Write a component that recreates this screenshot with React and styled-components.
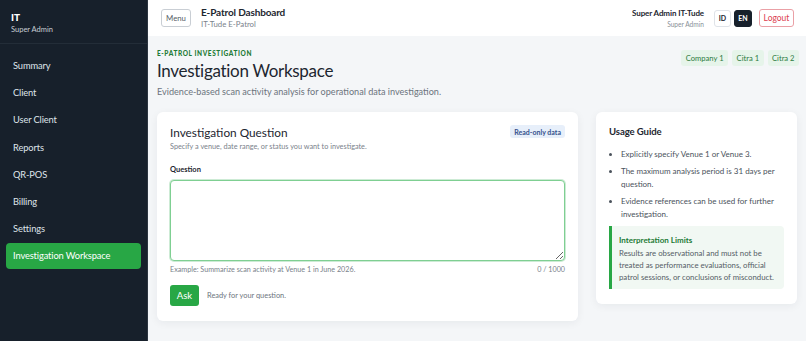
import React from "react";
import styled, { createGlobalStyle } from "styled-components";

const Global = createGlobalStyle`
  html, body { margin: 0; padding: 0; }
  body { font-family: Lato, "Noto Sans", sans-serif; background: #f4f6f8; color: #1d2630; }
  * { box-sizing: border-box; }
`;

const Shell = styled.div`
  display: flex;
  width: 806px;
  height: 341px;
  overflow: hidden;
`;

const Sidebar = styled.aside`
  width: 148px;
  flex: none;
  background: #17202b;
  border-right: 1px solid #2c3540;
  display: flex;
  flex-direction: column;
`;

const Brand = styled.div`
  padding: 11px 11px 9px;
  border-bottom: 1px solid #232d38;
  height: 44px;
`;

const BrandTitle = styled.div`
  color: #fff;
  font-weight: 900;
  font-size: 10px;
  line-height: 13px;
`;

const BrandSub = styled.div`
  color: #c7cdd4;
  font-size: 7.5px;
  line-height: 12px;
`;

const Nav = styled.nav`
  display: flex;
  flex-direction: column;
  gap: 2px;
  padding: 9px 6px;
`;

const NavItem = styled.div`
  height: 25.2px;
  display: flex;
  align-items: center;
  padding: 0 7px;
  border-radius: 4px;
  font-size: 9.3px;
  letter-spacing: -0.12px;
  color: ${(p) => (p.$active ? "#ffffff" : "#dfe4ea")};
  background: ${(p) => (p.$active ? "#28a745" : "transparent")};
`;

const Main = styled.div`
  flex: 1;
  display: flex;
  flex-direction: column;
  min-width: 0;
`;

const Topbar = styled.header`
  height: 36px;
  background: #fff;
  display: flex;
  align-items: center;
  padding: 0 12px 0 13px;
  gap: 10px;
`;

const MenuBtn = styled.button`
  height: 18px;
  width: 30px;
  padding: 0;
  border: 1px solid #c9ced4;
  border-radius: 3px;
  background: #fff;
  color: #555d66;
  font-family: inherit;
  font-size: 7.8px;
`;

const TitleBlock = styled.div`
  display: flex;
  flex-direction: column;
  flex: 1;
`;

const AppTitle = styled.div`
  font-size: 10px;
  font-weight: 700;
  letter-spacing: -0.15px;
  line-height: 13px;
  color: #1d2630;
`;

const AppSub = styled.div`
  font-size: 7.8px;
  color: #7a828b;
  line-height: 11px;
`;

const UserBlock = styled.div`
  display: flex;
  flex-direction: column;
  align-items: flex-end;
`;

const UserName = styled.div`
  font-size: 8px;
  font-weight: 700;
  letter-spacing: -0.1px;
  line-height: 11px;
`;

const UserRole = styled.div`
  font-size: 6.6px;
  color: #8a9098;
  line-height: 10px;
`;

const Lang = styled.button`
  height: 17px;
  width: ${(p) => (p.$active ? "18px" : "17px")};
  padding: 0;
  border-radius: 3px;
  font-family: inherit;
  font-size: 7px;
  font-weight: 700;
  border: 1px solid ${(p) => (p.$active ? "#17202b" : "#dfe3e8")};
  background: ${(p) => (p.$active ? "#17202b" : "#fff")};
  color: ${(p) => (p.$active ? "#fff" : "#1d2630")};
`;

const Actions = styled.div`
  display: flex;
  gap: 3px;
  align-items: center;
`;

const Logout = styled.button`
  margin-left: 4px;
  height: 18px;
  width: 35px;
  padding: 0;
  border-radius: 3px;
  border: 1px solid #eaa0a6;
  background: #fff;
  color: #dc4150;
  font-family: inherit;
  font-size: 8.5px;
`;

const Content = styled.main`
  padding: 13px 7px 0 9px;
  display: flex;
  flex-direction: column;
`;

const PageHead = styled.div`
  display: flex;
  justify-content: space-between;
  align-items: flex-start;
`;

const Eyebrow = styled.div`
  font-size: 6.5px;
  font-weight: 900;
  letter-spacing: 0.6px;
  color: #1e7b36;
  line-height: 10px;
`;

const PageTitle = styled.h1`
  margin: 0;
  font-size: 17px;
  font-weight: 400;
  letter-spacing: -0.3px;
  line-height: 24px;
  color: #1d2630;
`;

const PageSub = styled.p`
  margin: 2px 0 0;
  font-size: 9.1px;
  color: #6c747d;
  line-height: 14px;
`;

const Chips = styled.div`
  display: flex;
  gap: 4px;
  margin-top: 1px;
`;

const Chip = styled.span`
  height: 16px;
  display: inline-flex;
  align-items: center;
  padding: 0 4.5px;
  border-radius: 3px;
  background: #e6f4ea;
  color: #2b7a3e;
  font-size: 7.6px;
`;

const Grid = styled.div`
  display: grid;
  grid-template-columns: 421px 201px;
  gap: 18px;
  margin-top: 13px;
  align-items: start;
`;

const Card = styled.section`
  background: #fff;
  border-radius: 6px;
  box-shadow: 0 2px 8px rgba(20, 30, 45, 0.06);
  padding: 13px 13px 15px;
`;

const CardHead = styled.div`
  display: flex;
  justify-content: space-between;
  align-items: flex-start;
`;

const CardTitle = styled.h2`
  margin: 0;
  font-size: 11.8px;
  font-weight: 400;
  line-height: 16px;
`;

const CardSub = styled.div`
  font-size: 7.3px;
  color: #7a828b;
  line-height: 12px;
`;

const Badge = styled.span`
  height: 13px;
  display: inline-flex;
  align-items: center;
  padding: 0 4px;
  border-radius: 3px;
  background: #e7effa;
  color: #35518c;
  font-size: 7px;
  font-weight: 700;
`;

const Label = styled.div`
  margin-top: 12px;
  font-size: 7.5px;
  font-weight: 700;
  line-height: 10px;
`;

const TextArea = styled.textarea`
  display: block;
  width: 100%;
  height: 81px;
  margin-top: 5px;
  border: 1px solid #7fcf92;
  box-shadow: 0 0 0 1px #cdebd5;
  border-radius: 4px;
  resize: vertical;
  font-family: inherit;
  outline: none;
`;

const HintRow = styled.div`
  display: flex;
  justify-content: space-between;
  margin-top: 3px;
  font-size: 7.2px;
  color: #7a828b;
  line-height: 12px;
`;

const AskRow = styled.div`
  display: flex;
  align-items: center;
  gap: 8px;
  margin-top: 9px;
`;

const AskBtn = styled.button`
  height: 21px;
  width: 29px;
  padding: 0;
  border: none;
  border-radius: 3px;
  background: #28a745;
  color: #fff;
  font-family: inherit;
  font-size: 9.5px;
`;

const Status = styled.span`
  font-size: 7.4px;
  color: #6c747d;
`;

const GuideTitle = styled.h3`
  margin: 0;
  font-size: 9.6px;
  font-weight: 700;
  letter-spacing: -0.1px;
  line-height: 14px;
`;

const List = styled.ul`
  margin: 9px 0 0;
  padding-left: 12px;
  font-size: 8px;
  line-height: 13px;
  color: #4a525b;
  li { margin-bottom: 4px; }
  li::marker { font-size: 8px; }
`;

const Callout = styled.div`
  margin-top: 5px;
  background: #f1f8f3;
  border-left: 3px solid #28a745;
  border-radius: 0 4px 4px 0;
  padding: 8px 8px 6px 7px;
`;

const CalloutTitle = styled.div`
  font-size: 8px;
  font-weight: 700;
  color: #1e7b36;
  line-height: 12px;
`;

const CalloutText = styled.div`
  margin-top: 1px;
  font-size: 7.8px;
  color: #555d66;
  line-height: 12px;
`;

const navItems = ["Summary", "Client", "User Client", "Reports", "QR-POS", "Billing", "Settings", "Investigation Workspace"];

export default function App() {
  return (
    <>
      <Global />
      <Shell>
        <Sidebar>
          <Brand>
            <BrandTitle>IT</BrandTitle>
            <BrandSub>Super Admin</BrandSub>
          </Brand>
          <Nav>
            {navItems.map((n) => (
              <NavItem key={n} $active={n === "Investigation Workspace"}>{n}</NavItem>
            ))}
          </Nav>
        </Sidebar>
        <Main>
          <Topbar>
            <MenuBtn>Menu</MenuBtn>
            <TitleBlock>
              <AppTitle>E-Patrol Dashboard</AppTitle>
              <AppSub>IT-Tude E-Patrol</AppSub>
            </TitleBlock>
            <UserBlock>
              <UserName>Super Admin IT-Tude</UserName>
              <UserRole>Super Admin</UserRole>
            </UserBlock>
            <Actions>
              <Lang>ID</Lang>
              <Lang $active>EN</Lang>
              <Logout>Logout</Logout>
            </Actions>
          </Topbar>
          <Content>
            <PageHead>
              <div>
                <Eyebrow>E-PATROL INVESTIGATION</Eyebrow>
                <PageTitle>Investigation Workspace</PageTitle>
                <PageSub>Evidence-based scan activity analysis for operational data investigation.</PageSub>
              </div>
              <Chips>
                <Chip>Company 1</Chip>
                <Chip>Citra 1</Chip>
                <Chip>Citra 2</Chip>
              </Chips>
            </PageHead>
            <Grid>
              <Card>
                <CardHead>
                  <div>
                    <CardTitle>Investigation Question</CardTitle>
                    <CardSub>Specify a venue, date range, or status you want to investigate.</CardSub>
                  </div>
                  <Badge>Read-only data</Badge>
                </CardHead>
                <Label>Question</Label>
                <TextArea />
                <HintRow>
                  <span>Example: Summarize scan activity at Venue 1 in June 2026.</span>
                  <span>0 / 1000</span>
                </HintRow>
                <AskRow>
                  <AskBtn>Ask</AskBtn>
                  <Status>Ready for your question.</Status>
                </AskRow>
              </Card>
              <Card>
                <GuideTitle>Usage Guide</GuideTitle>
                <List>
                  <li>Explicitly specify Venue 1 or Venue 3.</li>
                  <li>The maximum analysis period is 31 days per question.</li>
                  <li>Evidence references can be used for further investigation.</li>
                </List>
                <Callout>
                  <CalloutTitle>Interpretation Limits</CalloutTitle>
                  <CalloutText>Results are observational and must not be treated as performance evaluations, official patrol sessions, or conclusions of misconduct.</CalloutText>
                </Callout>
              </Card>
            </Grid>
          </Content>
        </Main>
      </Shell>
    </>
  );
}
